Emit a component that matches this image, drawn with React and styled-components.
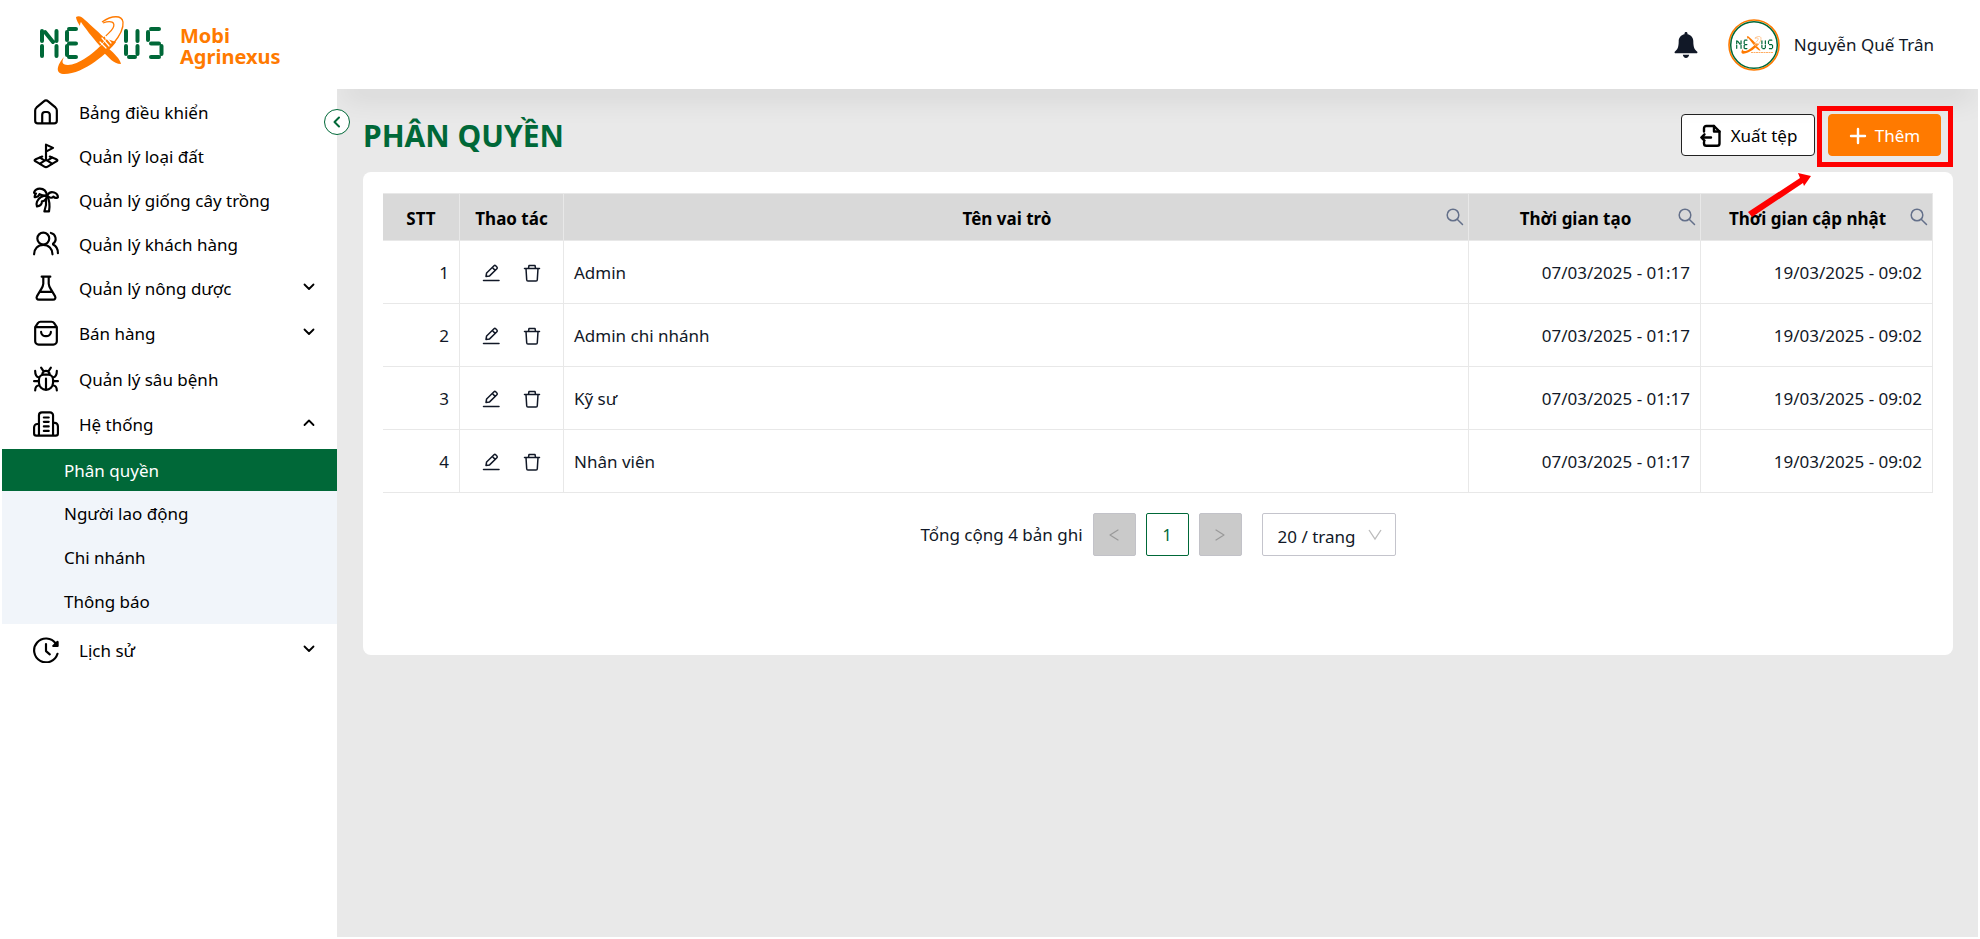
import React, { useId } from "react";
import styled, { createGlobalStyle, css } from "styled-components";

const GREEN = "#006838";
const ORANGE = "#ff7a00";
const INK = "#111827";

const GlobalStyle = createGlobalStyle`
  *, *::before, *::after { box-sizing: border-box; }
  body {
    margin: 0;
    background: #fff;
    color: #000;
    font-family: "Noto Sans", "Open Sans", sans-serif;
    font-size: 17px;
    line-height: 24px;
  }
  button, select { font: inherit; color: inherit; }
  h1, p, ul { margin: 0; padding: 0; }
  ul { list-style: none; }
  a { color: inherit; text-decoration: none; }
`;

const Page = styled.div`
  display: flex;
  flex-direction: column;
  min-height: 100vh;
  padding: 0 2px 2px;
`;

const Header = styled.header`
  display: flex;
  align-items: center;
  justify-content: space-between;
  height: 89px;
  padding: 0 44px 0 36px;
`;

const Brand = styled.a`
  display: flex;
  align-items: center;
  gap: 16px;
  color: ${ORANGE};
  font-size: 20px;
  line-height: 21px;
  font-weight: 700;
`;

const BrandName = styled.span`
  width: 110px;
  padding-top: 3px;
`;

const Account = styled.div`
  display: flex;
  align-items: center;
  gap: 14px;
  color: ${INK};
`;

const PlainButton = styled.button`
  display: inline-flex;
  align-items: center;
  justify-content: center;
  padding: 0;
  border: 0;
  background: none;
  cursor: pointer;
`;

const BellButton = styled(PlainButton)`
  margin-right: 16px;
`;

const Body = styled.div`
  display: flex;
  flex: 1;
`;

const Sidebar = styled.nav`
  position: relative;
  flex: 0 0 335px;
  padding-top: 1px;
`;

const CollapseButton = styled(PlainButton)`
  position: absolute;
  z-index: 2;
  top: 20px;
  right: -13px;
  width: 26px;
  height: 26px;
  border: 1px solid ${GREEN};
  border-radius: 50%;
  background: #fff;
  color: ${GREEN};
`;

const MenuLink = styled.a`
  display: flex;
  align-items: center;
  gap: 20px;
  height: ${(p) => (p.$tall ? 46 : 44)}px;
  padding: 0 21px 0 31px;

  & > span + svg { margin-bottom: 2px; }
`;

const MenuLabel = styled.span`
  flex: 1;
  padding-top: 2px;
`;

const SubMenu = styled.ul`
  margin: 3px 0 4px;
  padding-bottom: 1px;
  background: #f1f5fa;
`;

const SubLink = styled.a`
  display: flex;
  align-items: center;
  height: ${(p) => (p.$active ? 42 : 44)}px;
  padding: 2px 0 0 62px;
  ${(p) =>
    p.$active &&
    css`
      background: ${GREEN};
      color: #fff;
    `}
`;

const Main = styled.main`
  position: relative;
  flex: 1;
  min-width: 0;
  padding: 25px 25px 40px 26px;
  overflow: hidden;
  background: #e9e9e9;

  &::before {
    content: "";
    position: absolute;
    top: -20px;
    left: 0;
    right: 0;
    height: 20px;
    box-shadow: 0 10px 30px -5px rgba(0, 0, 0, 0.19);
  }
`;

const TitleBar = styled.div`
  display: flex;
  align-items: center;
  justify-content: space-between;
  height: 42px;
  margin-bottom: 16px;
`;

const Title = styled.h1`
  padding-top: 2px;
  color: ${GREEN};
  font-size: 30px;
  line-height: 40px;
  font-weight: 700;
`;

const Actions = styled.div`
  display: flex;
  gap: 13px;
  padding-right: 12px;
`;

const ActionButton = styled(PlainButton)`
  height: 42px;
  border-radius: 4px;
  gap: 8px;
  padding-top: 2px;
  width: ${(p) => (p.$primary ? 113 : 134)}px;
  border: 1px solid ${(p) => (p.$primary ? ORANGE : "#222")};
  background: ${(p) => (p.$primary ? ORANGE : "#fff")};
  color: ${(p) => (p.$primary ? "#fff" : "#000")};
`;

const Highlighted = styled.div`
  position: relative;
`;

const HighlightFrame = styled.span`
  position: absolute;
  inset: -8px -12px -11px -11px;
  border: 5px solid #f00;
  pointer-events: none;
`;

const HighlightArrow = styled.svg`
  position: absolute;
  z-index: 3;
  top: 58px;
  left: -83px;
  pointer-events: none;
`;

const Card = styled.section`
  min-height: 483px;
  padding: 21px 20px;
  border-radius: 8px;
  background: #fff;
`;

const Table = styled.table`
  width: 100%;
  table-layout: fixed;
  border-collapse: separate;
  border-spacing: 0;
  border-top: 1px solid #e8e8e8;
`;

const HeadCell = styled.th`
  height: 47px;
  padding: 3px 0 0;
  border: solid #e8e8e8;
  border-width: 0 1px 1px 0;
  background: #d9d9d9;
  font-weight: 700;
`;

const HeadContent = styled.div`
  display: flex;
  align-items: center;
  padding: 0 4px;
`;

const HeadLabel = styled.span`
  flex: 1;
  text-align: center;
`;

const SearchButton = styled(PlainButton)`
  color: #64708a;
  padding-bottom: 4px;
`;

const Cell = styled.td`
  height: 63px;
  padding: 1px 10px 0;
  border: solid #e8e8e8;
  border-width: 0 1px 1px 0;
  color: ${INK};
  text-align: ${(p) => p.$align || "left"};
`;

const RowActions = styled.div`
  display: flex;
  justify-content: center;
  gap: 21px;
`;

const Pagination = styled.div`
  display: flex;
  align-items: center;
  justify-content: center;
  gap: 10px;
  margin-top: 20px;
  color: ${INK};
`;

const PageButton = styled(PlainButton)`
  width: 43px;
  height: 43px;
  border-radius: 2px;
  font-size: 16px;
  border: 1px solid ${(p) => (p.$current ? GREEN : "#c2c2c8")};
  background: ${(p) => (p.$current ? "#fff" : "#cacaca")};
  color: ${(p) => (p.$current ? GREEN : "#999")};
`;

const SelectWrap = styled.div`
  display: grid;
  align-items: center;
  width: 134px;
  margin-left: 10px;
  & > * { grid-area: 1 / 1; }
  & > svg { justify-self: end; margin-right: 14px; pointer-events: none; }
`;

const Select = styled.select`
  height: 43px;
  width: 100%;
  padding: 4px 0 0 15px;
  border: 1px solid #c4c4cc;
  border-radius: 2px;
  background: #fff;
  appearance: none;
`;

function Icon({ size = 26, width = 2, box = 24, children }) {
  return (
    <svg width={size} height={size} viewBox={`0 0 ${box} ${box}`} fill="none" stroke="currentColor"
      strokeWidth={width} strokeLinecap="round" strokeLinejoin="round" aria-hidden="true">
      {children}
    </svg>
  );
}

const HomeIcon = () => (
  <Icon>
    <path d="M2 10.500C2 9.300 2.400 8.600 3.300 7.800L10 2.200c1.300-1.100 2.700-1.100 4 0l6.700 5.600c.9.8 1.300 1.500 1.300 2.700V20a2.500 2.500 0 0 1-2.500 2.500h-15A2.500 2.500 0 0 1 2 20z" />
    <path d="M8.500 22v-7.500a2.500 2.500 0 0 1 2.500-2.500h2a2.500 2.500 0 0 1 2.500 2.500V22" />
  </Icon>
);

const LandIcon = () => (
  <Icon width={2}>
    <path d="M12 15V1.500l6.500 3L12 8" />
    <path d="M8.500 12.500 2.500 15c-1.400.6-1.400 1.400 0 2l8 4.800c1 .6 2 .6 3 0l8-4.800c1.400-.6 1.400-1.400 0-2l-6-2.500" />
    <path d="m6.500 19 4.200-2.800c1-.6 1.600-.6 2.600 0L17.500 19M6.500 13.500l4.200 2.700M17.500 13.500l-4.200 2.700" />
  </Icon>
);

const PalmIcon = () => (
  <Icon width={2}>
    <path d="M13 8C14.500 5 17 4.200 19.500 5c2.200.7 3.500 2.500 3.500 4.500-1.500 1-3 .8-4.200-.7-1 1.400-3 1.400-4.300.4" />
    <path d="M13 8c-.6-4-3.300-6.500-6.700-6.500-2.600 0-4.500 1.300-5.300 3.500 0 .8.7 1.300 1.800 1C2 6.800 1.500 8 1.500 9.300 4 9.500 5.500 8.300 6 6.500 8 8 10.300 8 13 8z" />
    <path d="M13 8c-3.300 0-7.500 1.500-9.300 5.500-.7 1.700-.6 3 0 4.500 3.300-.7 4.800-2.500 4.500-4.700 2.400-.2 4-2 4.800-5.300z" />
    <path d="M13 8c2.500 4.500 2.600 9.500 1.800 14.500h-4.300c1.600-4 2-7.500 1.500-11" />
  </Icon>
);

const UsersIcon = () => (
  <Icon>
    <circle cx="9.500" cy="7" r="5.500" />
    <path d="M1 21.500c0-5 3.600-8.700 8.500-8.700s8.500 3.700 8.500 8.700M16.500 1.800a5.500 5.500 0 0 1 2 9.900M18.500 12.500c2.800 1.300 4.500 4.300 4.500 8" />
  </Icon>
);

const FlaskIcon = () => (
  <Icon>
    <path d="M8 1.500h8M9.500 1.500V8c0 2-1 3.500-2.500 6l-3.300 5.500c-1 1.800 0 3.300 1.800 3.300h13c1.800 0 2.800-1.500 1.800-3.300L17 14c-1.500-2.500-2.500-4-2.500-6V1.500M6.500 15.500h11" />
  </Icon>
);

const BagIcon = () => (
  <Icon>
    <path d="M2 6.500v13A3.200 3.200 0 0 0 5.200 22.700h13.600a3.200 3.200 0 0 0 3.200-3.200v-13l-2.500-3.600c-.6-.9-1.300-1.300-2.400-1.300H6.900c-1.100 0-1.800.4-2.400 1.300zM2 6.500h20M7.500 11c0 5.200 9 5.200 9 0" />
  </Icon>
);

const BugIcon = () => (
  <Icon>
    <path d="M12 22a6.500 6.500 0 0 0 6.500-6.500v-3A4.500 4.500 0 0 0 14 8h-4a4.500 4.500 0 0 0-4.500 4.500v3A6.500 6.500 0 0 0 12 22zM12 11.500V22M8.500 8a3.500 3.500 0 0 1 7 0M9.500 4.500 7.500 1.500M14.500 4.500l2-3M5.500 14H1M23 14h-4.500M5.500 10.500C3 10 2 8.500 2 4.500M18.500 10.500c2.500-.5 3.500-2 3.500-6M6 17.500c-2.500.3-4 1.800-4 5M18 17.500c2.500.3 4 1.800 4 5" />
  </Icon>
);

const BuildingIcon = () => (
  <Icon>
    <path d="M5.500 22.700V4A2.800 2.800 0 0 1 8.300 1.200h7.400A2.800 2.800 0 0 1 18.500 4v18.700M3 22.700h18a2 2 0 0 0 2-2V14a3 3 0 0 0-3-3h-1.500M5.500 12H4a3 3 0 0 0-3 3v5.700a2 2 0 0 0 2 2M10 6h4.500M10 10h4.500M10 14.200h4.500M10 18.400h4.500" />
  </Icon>
);

const HistoryIcon = () => (
  <Icon width={2}>
    <path d="M22.600 15.500A11 11 0 1 1 21 6M12 6.500V13l3.500 3" />
    <path d="M22.700 4.500v3.800h-4z" fill="currentColor" />
  </Icon>
);

const Chevron = ({ up, size = 14 }) => (
  <Icon size={size} box={14} width={1.800}>
    <path d={up ? "M2.500 9 7 4.500 11.500 9" : "M2.500 4.500 7 9l4.500-4.500"} />
  </Icon>
);

const SearchIcon = () => (
  <Icon size={18} width={1.500} box={18}>
    <circle cx="7" cy="7" r="5.800" />
    <path d="m11.200 11.200 5.300 5.300" />
  </Icon>
);

const EditIcon = () => (
  <Icon size={20} width={1.500} box={20}>
    <path d="M2.500 17.500H18M5 13.500l.6-3.500 7.400-7.200c.5-.5 1.200-.5 1.700 0l1.200 1.200c.5.5.5 1.200 0 1.700L8.600 12.900zM11.300 4.500l2.900 2.900" />
  </Icon>
);

const TrashIcon = () => (
  <Icon size={20} width={1.500} box={20}>
    <path d="M2.500 5.500h15M4 5.500l.7 11.200c0 .8.6 1.300 1.300 1.300h8c.7 0 1.300-.5 1.300-1.300L16 5.500M6.500 5.200 7 2.500h6l.5 2.700" />
  </Icon>
);

const ExportIcon = () => (
  <Icon size={24} width={2.400}>
    <path d="M5 7.500V4.300A2.300 2.300 0 0 1 7.300 2H15l5.500 5.500v12a2.300 2.300 0 0 1-2.300 2.300H7.300A2.300 2.300 0 0 1 5 19.500V18" />
    <path d="M15 2v5.500h5.500M12 13.500H2.500M5.500 10.300l-3.200 3.200 3.200 3.200" />
  </Icon>
);

const PlusIcon = () => (
  <Icon size={18} width={2.400} box={18}><path d="M9 2v14M2 9h14" /></Icon>
);

const BellIcon = () => (
  <svg width="24" height="26" viewBox="0 0 24 26" fill={INK} aria-hidden="true">
    <path d="M12 0c1 0 1.500.7 1.500 1.600v.6c3.600.7 5.800 3.400 5.800 7 0 6.500 1.600 8.500 3.700 10.200.9.800.4 1.800-.8 1.800H1.800c-1.200 0-1.700-1-.8-1.800 2.100-1.700 3.700-3.700 3.700-10.200 0-3.600 2.200-6.300 5.800-7v-.6C10.500.7 11 0 12 0zM8.800 22.800h6.400C14.800 24.600 13.700 26 12 26s-2.800-1.400-3.200-3.200z" />
  </svg>
);

function LogoArt() {
  return (
    <>
      <g stroke={GREEN} strokeWidth="4" strokeLinecap="round" fill="none">
        <path d="M4 16v10M4 31v10M7 17l8 10M18.500 16v10M18.500 31v10" />
        <path d="M31 14h7M29 17v8M31 28.500h7M29 31v9M31 42h7" />
        <path d="M88 16v10M88 31v8M91 42h6M99.500 16v10M99.500 31v8" />
        <path d="M113 14h8M110 17v8M113 28.500h8M123.500 31v8M113 42h8" />
      </g>
      <path d="M38 2c3-2 6 0 9 3 6 5 15 14 21 19l-6 7C54 22 47 13 43 7c-1 1-1 4-1 4s-4-6-4-9z" fill={ORANGE} />
      <path d="M71 34c5 4 11 10 12 15-8 0-12-7-18-12z" fill={ORANGE} />
      <path d="M26 42c-7 8-9 16-1 17 20 1 46-22 53-32l-9-3c-12 14-29 26-39 26-7 0-6-4-4-8z" fill={ORANGE} />
      <path d="M64 7c10-7 20-7 21 0 1 8-5 16-10 22" fill="none" stroke={ORANGE} strokeWidth="1.300" />
      <path d="M65 8c8-3 13-1 10 5-2 4-6 6-9 10" fill="none" stroke={ORANGE} strokeWidth="1.300" />
      <path d="m67 21 6 7M64 23l7 8M62 27l6 6" stroke="#fff" strokeWidth="1.200" strokeLinecap="round" />
    </>
  );
}

const Logo = () => (
  <svg width="126" height="60" viewBox="0 0 126 60" aria-hidden="true"><LogoArt /></svg>
);

const Avatar = () => (
  <svg width="52" height="52" viewBox="0 0 52 52" role="img" aria-label="Nexus">
    <circle cx="26" cy="26" r="25" fill="#fff" stroke={ORANGE} strokeWidth="1.600" />
    <circle cx="26" cy="26" r="23.300" fill="none" stroke={GREEN} strokeWidth="1.500" />
    <g transform="translate(7.500 17) scale(.3)"><LogoArt /></g>
    <path d="M23 33.500h22" stroke={ORANGE} strokeWidth="1.200" strokeDasharray="2 .5" opacity=".6" />
  </svg>
);

const MENU = [
  { label: "Bảng điều khiển", icon: HomeIcon },
  { label: "Quản lý loại đất", icon: LandIcon },
  { label: "Quản lý giống cây trồng", icon: PalmIcon },
  { label: "Quản lý khách hàng", icon: UsersIcon },
  { label: "Quản lý nông dược", icon: FlaskIcon, group: true },
  { label: "Bán hàng", icon: BagIcon, group: true, tall: true },
  { label: "Quản lý sâu bệnh", icon: BugIcon, tall: true },
  {
    label: "Hệ thống", icon: BuildingIcon, group: true,
    children: ["Phân quyền", "Người lao động", "Chi nhánh", "Thông báo"],
  },
  { label: "Lịch sử", icon: HistoryIcon, group: true },
];

const ROLES = ["Admin", "Admin chi nhánh", "Kỹ sư", "Nhân viên"];

function SearchableHead({ children }) {
  return (
    <HeadCell scope="col">
      <HeadContent>
        <HeadLabel>{children}</HeadLabel>
        <SearchButton aria-label={`Tìm ${children}`}><SearchIcon /></SearchButton>
      </HeadContent>
    </HeadCell>
  );
}

export default function App() {
  const sizeId = useId();
  return (
    <>
      <GlobalStyle />
      <Page>
        <Header>
          <Brand href="#">
            <Logo />
            <BrandName>Mobi Agrinexus</BrandName>
          </Brand>
          <Account>
            <BellButton aria-label="Thông báo"><BellIcon /></BellButton>
            <Avatar />
            <span>Nguyễn Quế Trân</span>
          </Account>
        </Header>
        <Body>
          <Sidebar>
            <CollapseButton aria-label="Thu gọn">
              <Icon size={14} box={14} width={2}><path d="M9 2.500 4.500 7 9 11.500" /></Icon>
            </CollapseButton>
            <ul>
              {MENU.map(({ label, icon: Glyph, group, tall, children }) => (
                <li key={label}>
                  <MenuLink href="#" $tall={tall}>
                    <Glyph />
                    <MenuLabel>{label}</MenuLabel>
                    {group && <Chevron up={Boolean(children)} />}
                  </MenuLink>
                  {children && (
                    <SubMenu>
                      {children.map((name, i) => (
                        <li key={name}><SubLink href="#" $active={i === 0}>{name}</SubLink></li>
                      ))}
                    </SubMenu>
                  )}
                </li>
              ))}
            </ul>
          </Sidebar>
          <Main>
            <TitleBar>
              <Title>PHÂN QUYỀN</Title>
              <Actions>
                <ActionButton><ExportIcon />Xuất tệp</ActionButton>
                <Highlighted>
                  <ActionButton $primary><PlusIcon />Thêm</ActionButton>
                  <HighlightFrame />
                  <HighlightArrow width="72" height="50" viewBox="0 0 72 50" aria-hidden="true">
                    <path d="M3 40 55 6l-2-5 13 3-7 10-1-3L7 45z" fill="#f00" />
                  </HighlightArrow>
                </Highlighted>
              </Actions>
            </TitleBar>
            <Card>
              <Table>
                <colgroup>
                  <col width="77" />
                  <col width="104" />
                  <col />
                  <col width="232" />
                  <col width="232" />
                </colgroup>
                <thead>
                  <tr>
                    <HeadCell scope="col">STT</HeadCell>
                    <HeadCell scope="col">Thao tác</HeadCell>
                    <SearchableHead>Tên vai trò</SearchableHead>
                    <SearchableHead>Thời gian tạo</SearchableHead>
                    <SearchableHead>Thời gian cập nhật</SearchableHead>
                  </tr>
                </thead>
                <tbody>
                  {ROLES.map((role, i) => (
                    <tr key={role}>
                      <Cell $align="right">{i + 1}</Cell>
                      <Cell>
                        <RowActions>
                          <PlainButton aria-label="Sửa"><EditIcon /></PlainButton>
                          <PlainButton aria-label="Xóa"><TrashIcon /></PlainButton>
                        </RowActions>
                      </Cell>
                      <Cell>{role}</Cell>
                      <Cell $align="right">07/03/2025 - 01:17</Cell>
                      <Cell $align="right">19/03/2025 - 09:02</Cell>
                    </tr>
                  ))}
                </tbody>
              </Table>
              <Pagination>
                <span>Tổng cộng 4 bản ghi</span>
                <PageButton aria-label="Trang trước" disabled>
                  <Icon size={14} box={14} width={1.200}><path d="M11 2 3 7l8 5" /></Icon>
                </PageButton>
                <PageButton $current>1</PageButton>
                <PageButton aria-label="Trang sau" disabled>
                  <Icon size={14} box={14} width={1.200}><path d="m3 2 8 5-8 5" /></Icon>
                </PageButton>
                <SelectWrap>
                  <Select id={sizeId} aria-label="Số bản ghi mỗi trang" defaultValue="20">
                    <option value="20">20 / trang</option>
                    <option value="50">50 / trang</option>
                  </Select>
                  <svg width="14" height="12" viewBox="0 0 14 12" fill="none" stroke="#bbb" strokeWidth="1.300" aria-hidden="true">
                    <path d="m1 1 6 9 6-9" />
                  </svg>
                </SelectWrap>
              </Pagination>
            </Card>
          </Main>
        </Body>
      </Page>
    </>
  );
}
